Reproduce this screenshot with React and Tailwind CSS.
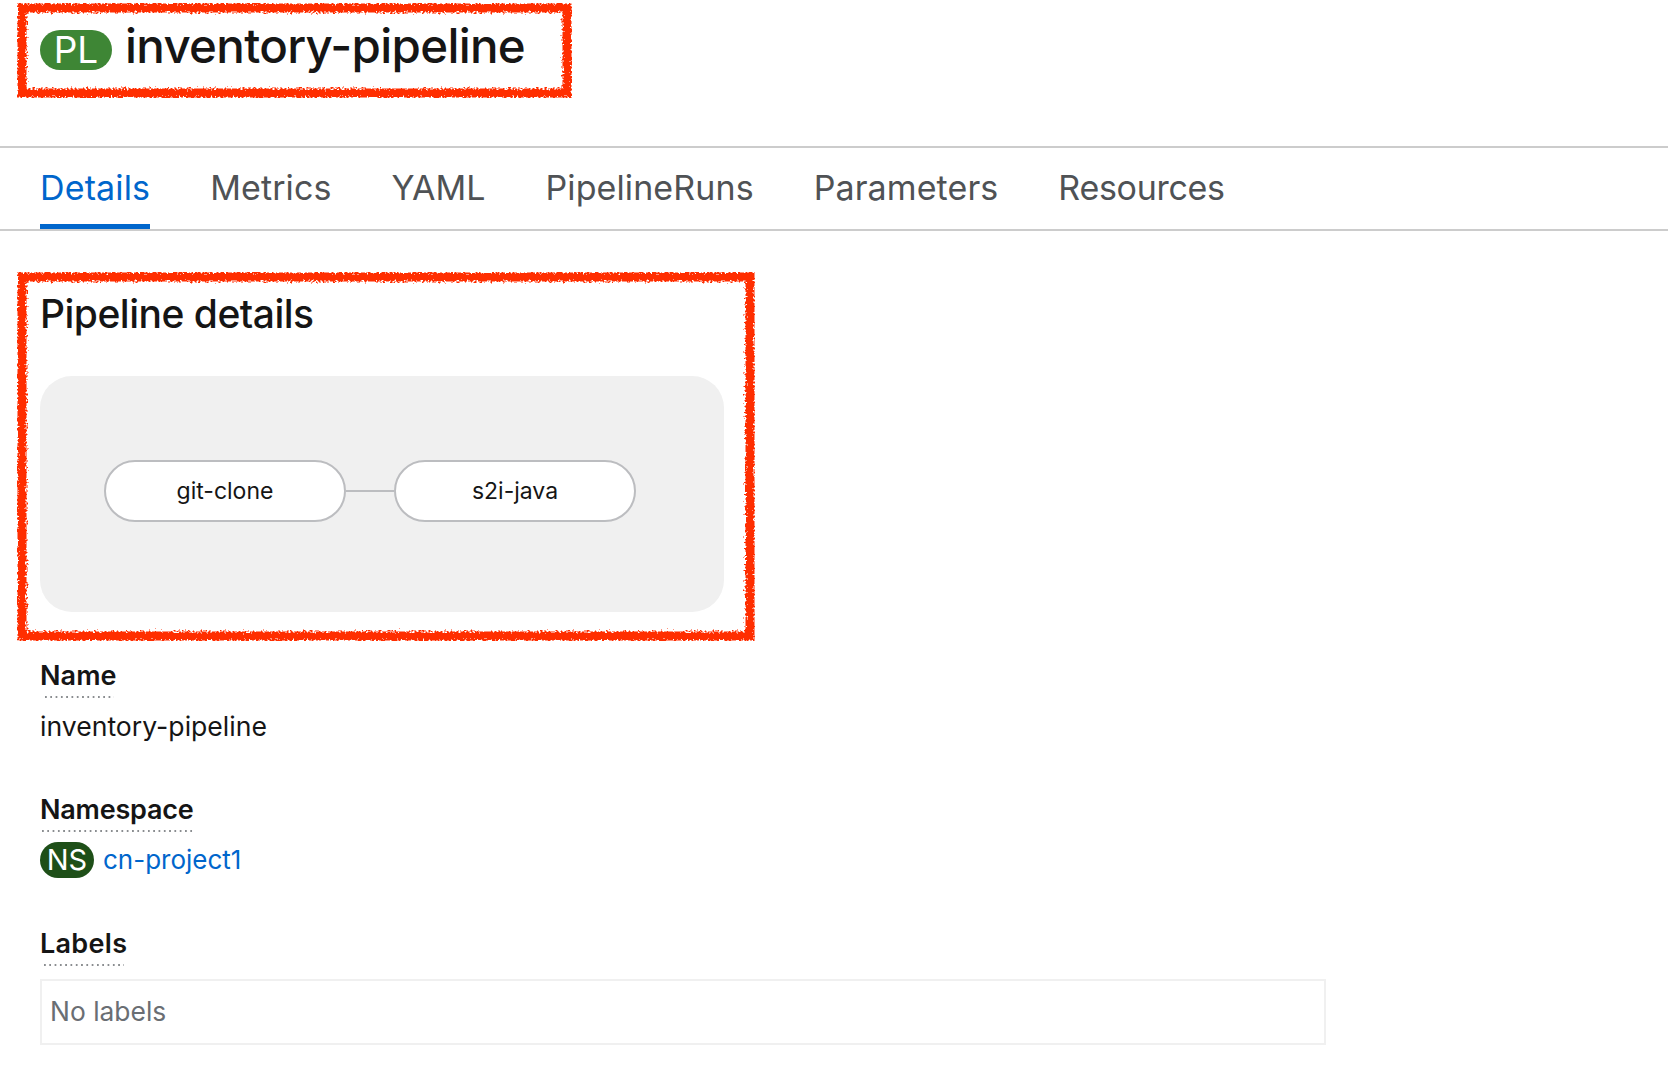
import React from "react";

const sans = "font-['Inter','Noto_Sans',sans-serif]";

function Scribble({ id, w, h }) {
  return (
    <svg className="absolute inset-0 pointer-events-none" width={w} height={h} viewBox={`0 0 ${w} ${h}`} aria-hidden="true">
      <defs>
        <filter id={id} x="-2%" y="-5%" width="104%" height="110%">
          <feTurbulence type="fractalNoise" baseFrequency="0.5" numOctaves="3" seed="4" result="n" />
          <feDisplacementMap in="SourceGraphic" in2="n" scale="8" xChannelSelector="R" yChannelSelector="G" />
        </filter>
      </defs>
      <rect x="5" y="5" width={w - 10} height={h - 10} fill="none" stroke="#ff2d00" strokeWidth="9" filter={`url(#${id})`} />
    </svg>
  );
}

function Term({ children, line, text }) {
  return (
    <div className="flex flex-col items-start">
      <div className={`text-[27px] leading-[34px] font-semibold text-[#151515] ${text}`}>{children}</div>
      <div className={`mt-[3px] h-[2px] bg-[linear-gradient(to_right,#8a8d90_40%,transparent_40%)] bg-[length:5.3px_2px] ${line}`} />
    </div>
  );
}

const tabs = [
  { t: "Metrics", c: "tracking-[0.1px]" },
  { t: "YAML", c: "tracking-[0px]" },
  { t: "PipelineRuns", c: "tracking-[0.1px]" },
  { t: "Parameters", c: "tracking-[0.1px]" },
  { t: "Resources", c: "tracking-[-0.3px]" },
];

export default function App() {
  return (
    <div className={`h-[1066px] w-[1668px] bg-white overflow-hidden ${sans}`}>
      <header className="h-[146px] pt-[3px] pl-[17px]">
        <div className="relative flex h-[95px] w-[555px] items-center gap-[13px] pl-[23px]">
          <span className="mt-[-2px] flex h-[40px] w-[72px] items-center justify-center rounded-full bg-[#3e8635] text-[37px] text-white">PL</span>
          <h1 className="mt-[-9px] text-[47.5px] leading-none font-medium tracking-[-0.7px] text-[#151515]">inventory-pipeline</h1>
          <Scribble id="s1" w={555} h={95} />
        </div>
      </header>

      <nav className="flex h-[85px] gap-[60px] border-y-2 border-[#cccccc] pl-[40px]">
        <div className="flex h-full items-center border-b-[5px] border-[#0066cc] pt-[2px] -mb-[1px] text-[34px] tracking-[0.15px] text-[#0066cc]">Details</div>
        {tabs.map(({ t, c }) => (
          <div key={t} className={`flex h-full items-center pb-[3px] text-[34px] text-[#4f5255] ${c}`}>{t}</div>
        ))}
      </nav>

      <section className="relative mt-[41px] ml-[17px] h-[369px] w-[738px] pt-[19px] pl-[23px]">
        <h2 className="text-[39px] leading-[46px] font-medium tracking-[-0.5px] text-[#151515]">Pipeline details</h2>
        <div className="mt-[39px] flex h-[236px] w-[684px] items-center rounded-[32px] bg-[#f0f0f0] pb-[6px] pl-[64px]">
          <div className="flex h-[62px] w-[242px] items-center justify-center rounded-full border-2 border-[#bcbdc0] bg-white text-[23px] text-[#151515]">git-clone</div>
          <div className="h-[2px] w-[48px] bg-[#bcbdc0]" />
          <div className="flex h-[62px] w-[242px] items-center justify-center rounded-full border-2 border-[#bcbdc0] bg-white text-[23px] text-[#151515]">s2i-java</div>
        </div>
        <Scribble id="s2" w={738} h={369} />
      </section>

      <dl className="mt-[18px] ml-[40px] flex flex-col">
        <div className="h-[134px]">
          <Term line="ml-[5px] w-[69px]" text="tracking-[0.1px]">Name</Term>
          <div className="mt-[10px] text-[26.6px] leading-[36px] text-[#151515]">inventory-pipeline</div>
        </div>
        <div className="h-[134px]">
          <Term line="ml-[2px] w-[151px]" text="tracking-[-0.2px]">Namespace</Term>
          <div className="mt-[10px] flex items-center gap-[9px]">
            <span className="flex h-[36px] w-[54px] items-center justify-center rounded-full bg-[#1e4f18] text-[29px] text-white">NS</span>
            <a className="text-[26px] leading-[36px] text-[#0066cc]">cn-project1</a>
          </div>
        </div>
        <div>
          <Term line="ml-[4px] w-[80px]" text="tracking-[0.3px]">Labels</Term>
          <div className="mt-[13px] flex h-[66px] w-[1286px] items-center border-2 border-[#f0f0f0] pl-[8px] text-[26.4px] text-[#6a6e73]">No labels</div>
        </div>
      </dl>
    </div>
  );
}
